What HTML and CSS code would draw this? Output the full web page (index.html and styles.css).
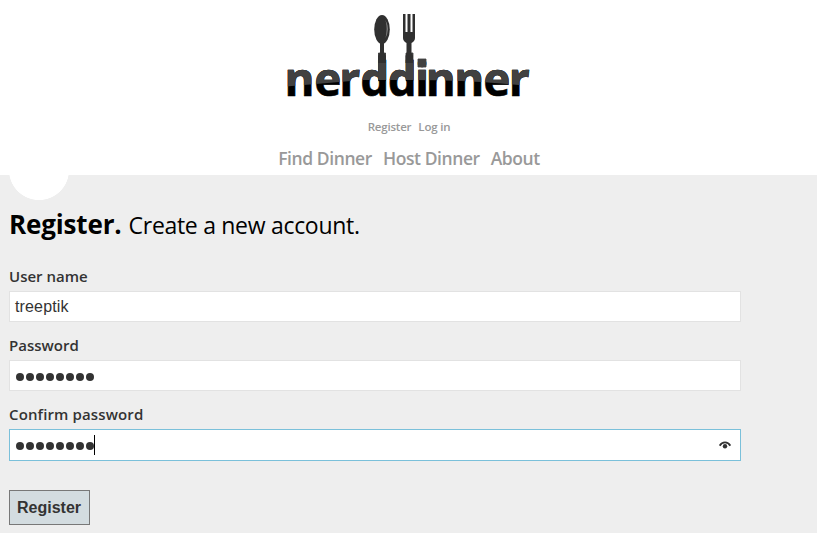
FILE: index.html
```
<!DOCTYPE html>
<html lang="en">
<head>
<meta charset="utf-8">
<title>Register - Nerd Dinner</title>
<link rel="stylesheet" href="styles.css">
</head>
<body>
<header class="header">
  <svg class="logo" viewBox="280 5 260 100" role="img" aria-label="nerddinner">
    <defs>
      <clipPath id="shine"><path d="M280 5H540V87Q475 80 413 80H363L280 87Z"/></clipPath>
      <g id="word">
        <text class="wordmark" y="96.500" transform="scale(.97 1)" x="293.5 324 350 371.500 399.800 428.200 439.300 468.500 498.300 524.800">nerddinner</text>
        <path d="M378.500 53h7v28h-7zM406 53h7v28h-7zM418 59h8v8h-8z"/>
      </g>
    </defs>
    <use href="#word" class="ink"/>
    <use href="#word" class="sheen" clip-path="url(#shine)"/>
    <ellipse class="metal" cx="382" cy="29.5" rx="7.8" ry="14.5"/>
    <path class="glint" d="M385.5 20Q390 29 385.5 38Q388 29 385.5 20Z"/>
    <path class="metal" d="M380 42h4v11l2 3v7h-8v-7l2-3z"/>
    <path class="metal" d="M403 14h2.500v18h2V14h3v18h2V14h2.500v24q0 3-3.500 5v10l1.500 3v7h-7.500v-7l1-3V43q-3.500-2-3.500-5z"/>
  </svg>
  <nav class="account"><a>Register</a><a>Log in</a></nav>
  <nav class="menu"><a>Find Dinner</a><a>Host Dinner</a><a>About</a></nav>
</header>
<main class="main">
  <div class="notch"></div>
  <h1 class="title"><b>Register.</b><span>Create a new account.</span></h1>
  <form class="form">
    <label>User name</label>
    <div class="field">treeptik</div>
    <label>Password</label>
    <div class="field"><span class="dots"><i></i><i></i><i></i><i></i><i></i><i></i><i></i><i></i></span></div>
    <label class="confirm">Confirm password</label>
    <div class="field focused"><span class="dots"><i></i><i></i><i></i><i></i><i></i><i></i><i></i><i></i></span><span class="caret"></span>
      <svg class="eye" viewBox="0 0 12 8"><path d="M.7 4.700Q2.500 1.400 6 1.400T11.300 4.700"/><circle cx="6" cy="5.300" r="2.200"/></svg>
    </div>
    <button type="button" class="submit">Register</button>
  </form>
</main>
</body>
</html>
```
FILE: styles.css
```
* { box-sizing: border-box; }
body { margin: 0; background: #eee; color: #333; font-family: "Open Sans", "Noto Sans", sans-serif; height: 533px; overflow: hidden; }
.header { height: 175px; background: #fff; display: flex; flex-direction: column; align-items: center; padding-top: 5px; }
.logo { width: 260px; height: 100px; flex: none; margin-left: 3px; }
.wordmark { font: bold 47px "Noto Sans", sans-serif; stroke-width: .6px; }
.ink { fill: #000; stroke: #000; stroke-width: .4px; }
.sheen { fill: #414141; stroke: #414141; stroke-width: .4px; }
.metal { fill: #303030; }
.glint { fill: #999; }
.account, .menu { display: flex; color: #999; font-weight: 600; white-space: nowrap; }
.account { font-size: 11.5px; line-height: 16px; margin-top: 14px; gap: 7px; letter-spacing: -.2px; margin-left: 1px; }
.menu { font-size: 17.500px; line-height: 24px; margin-top: 11px; gap: 11px; letter-spacing: -.42px; margin-left: 1px; }
.main { padding: 0 9px; }
.notch { width: 60px; height: 25px; background: radial-gradient(circle at 30px -5px, #fff 29.700px, transparent 30.300px); }
.title { margin: 5px 0 1px; height: 38px; line-height: 38px; color: #000; display: flex; align-items: baseline; gap: 7px; font-weight: 400; white-space: nowrap; }
.title b { font-size: 26px; letter-spacing: -.15px; }
.title span { font-size: 23px; letter-spacing: -.3px; }
.form { padding-top: 20px; }
label { display: block; height: 27px; line-height: 24px; font-size: 15px; font-weight: 600; }
.confirm { letter-spacing: .13px; }
.field { display: flex; align-items: center; width: 732px; height: 31px; margin-bottom: 11px; padding: 0 5px; border: 1px solid #e2e2e2; background: #fff; font: 16px "Liberation Sans", sans-serif; letter-spacing: .15px; }
.focused { height: 32px; border-color: #7ac0da; }
.dots { display: flex; gap: 2px; padding: 3px 0 0 1px; }
.dots i { width: 8px; height: 8px; border-radius: 50%; background: #333; }
.caret { width: 1px; height: 20px; background: #000; margin-top: -1px; }
.focused .dots { padding-top: 2px; }
.eye { width: 12px; height: 8px; margin: 0 4px 0 auto; }
.eye path { fill: none; stroke: #333; stroke-width: 1.800; }
.eye circle { fill: #333; }
.submit { display: block; width: 81px; height: 35px; margin-top: 29px; padding: 0 1px 0 0; border: 1px solid #787878; background: #d3dce0; color: #333; font: bold 16px "Liberation Sans", sans-serif; }
```
